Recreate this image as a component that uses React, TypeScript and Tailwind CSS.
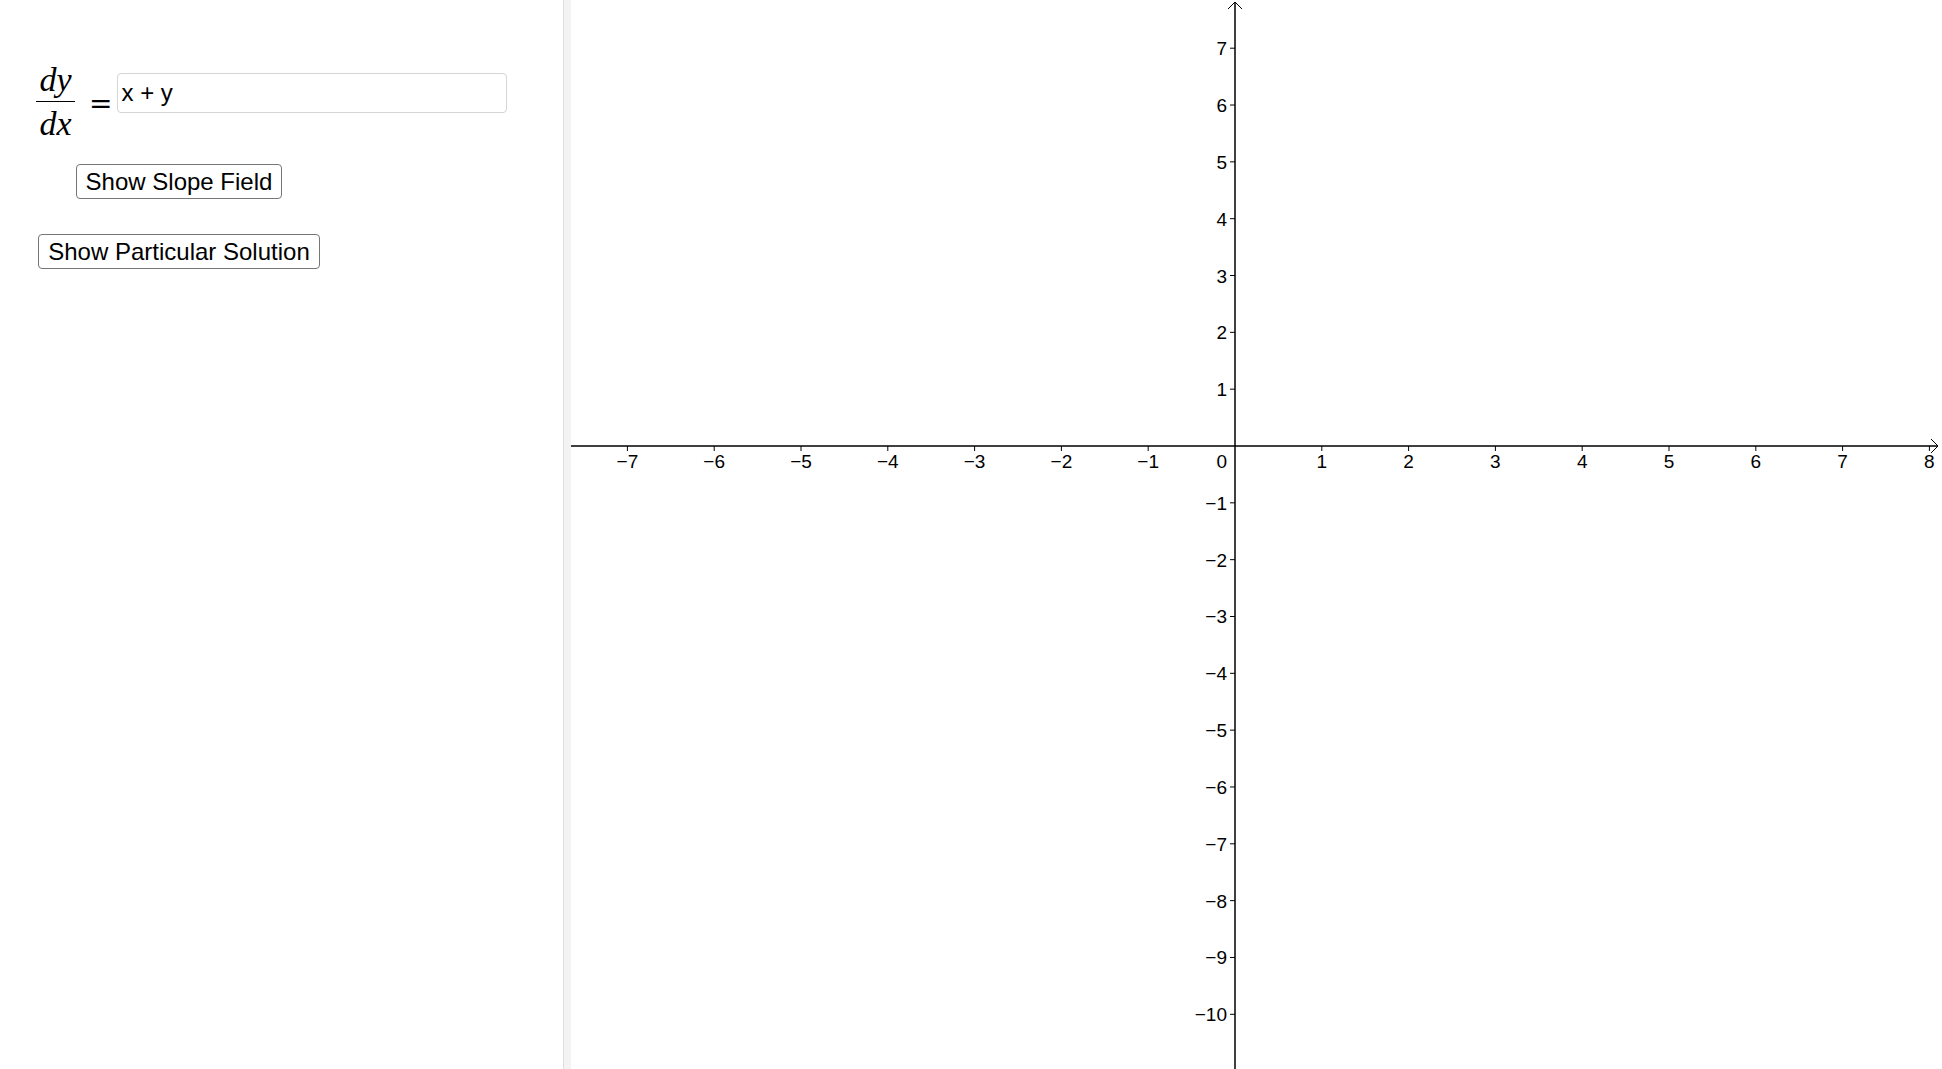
import React from "react";

// graph geometry (px inside the graphics view)
const VIEW_W = 1371;
const VIEW_H = 1069;
const ORIGIN_X = 664;
const ORIGIN_Y = 446;
const UNIT_X = 86.8;
const UNIT_Y = 56.83;

const minus = (n: number) => (n < 0 ? "\u2212" + Math.abs(n) : String(n));

const Graph: React.FC = () => {
  const xs = [-7, -6, -5, -4, -3, -2, -1, 1, 2, 3, 4, 5, 6, 7, 8];
  const ys = [7, 6, 5, 4, 3, 2, 1, -1, -2, -3, -4, -5, -6, -7, -8, -9, -10];

  return (
    <svg
      width={VIEW_W}
      height={VIEW_H}
      viewBox={`0 0 ${VIEW_W} ${VIEW_H}`}
      className="block"
      fontFamily="'Liberation Sans', Arial, sans-serif"
      fontSize={19}
    >
      {/* x axis */}
      <line x1={0} y1={ORIGIN_Y} x2={VIEW_W - 4} y2={ORIGIN_Y} stroke="#000" strokeWidth={1.5} />
      <polyline
        points={`${VIEW_W - 11},${ORIGIN_Y - 7} ${VIEW_W - 4},${ORIGIN_Y} ${VIEW_W - 11},${ORIGIN_Y + 7}`}
        fill="none"
        stroke="#000"
        strokeWidth={1}
      />
      {/* y axis */}
      <line x1={ORIGIN_X} y1={VIEW_H} x2={ORIGIN_X} y2={2} stroke="#000" strokeWidth={1.5} />
      <polyline
        points={`${ORIGIN_X - 7},${9} ${ORIGIN_X},${2} ${ORIGIN_X + 7},${9}`}
        fill="none"
        stroke="#000"
        strokeWidth={1}
      />

      {xs.map((n) => {
        const x = ORIGIN_X + n * UNIT_X;
        return (
          <g key={"x" + n}>
            <line x1={x} y1={ORIGIN_Y} x2={x} y2={ORIGIN_Y + 5} stroke="#000" strokeWidth={1} />
            <text x={x} y={ORIGIN_Y + 22} textAnchor="middle" fill="#000">
              {minus(n)}
            </text>
          </g>
        );
      })}

      {ys.map((n) => {
        const y = ORIGIN_Y - n * UNIT_Y;
        return (
          <g key={"y" + n}>
            <line x1={ORIGIN_X - 5} y1={y} x2={ORIGIN_X} y2={y} stroke="#000" strokeWidth={1} />
            <text x={ORIGIN_X - 8} y={y + 7} textAnchor="end" fill="#000">
              {minus(n)}
            </text>
          </g>
        );
      })}

      <text x={ORIGIN_X - 8} y={ORIGIN_Y + 22} textAnchor="end" fill="#000">
        0
      </text>
    </svg>
  );
};

const App: React.FC = () => {
  return (
    <div className="w-[1942px] h-[1069px] bg-white flex overflow-hidden font-['Liberation_Sans',Arial,sans-serif] text-black">
      {/* algebra / controls panel */}
      <div className="w-[563px] shrink-0 pt-[62px] pl-[36px]">
        <div className="flex items-start">
          <div className="flex flex-col items-center w-[39px] font-['Liberation_Serif','Times_New_Roman',serif] italic text-[34px]">
            <span className="leading-[36px]">dy</span>
            <div className="mt-[3px] w-[39px] h-px bg-black" />
            <span className="leading-[36px] mt-[4px]">dx</span>
          </div>
          <span className="ml-[14px] mt-[26px] font-['DejaVu_Serif',serif] text-[28px] leading-[32px]">=</span>
          <div className="ml-[5px] mt-[11px] w-[390px] h-[40px] border border-[#d4d4d4] rounded-[4px] flex items-center pl-[3px] text-[24px] leading-none">
            x + y
          </div>
        </div>

        <div className="flex flex-col items-center w-[282px] ml-[2px] mt-[22px] gap-[35px]">
          <button className="h-[35px] px-[9px] border border-[#767676] rounded-[4px] bg-white text-[24px] leading-none">
            Show Slope Field
          </button>
          <button className="h-[35px] px-[9px] border border-[#767676] rounded-[4px] bg-white text-[24px] leading-none">
            Show Particular Solution
          </button>
        </div>
      </div>

      {/* splitter */}
      <div className="w-[8px] shrink-0 h-full bg-[#f3f3f3] border-l border-[#dedede]" />

      {/* graphics view */}
      <div className="flex-1 h-full">
        <Graph />
      </div>
    </div>
  );
};

export default App;
